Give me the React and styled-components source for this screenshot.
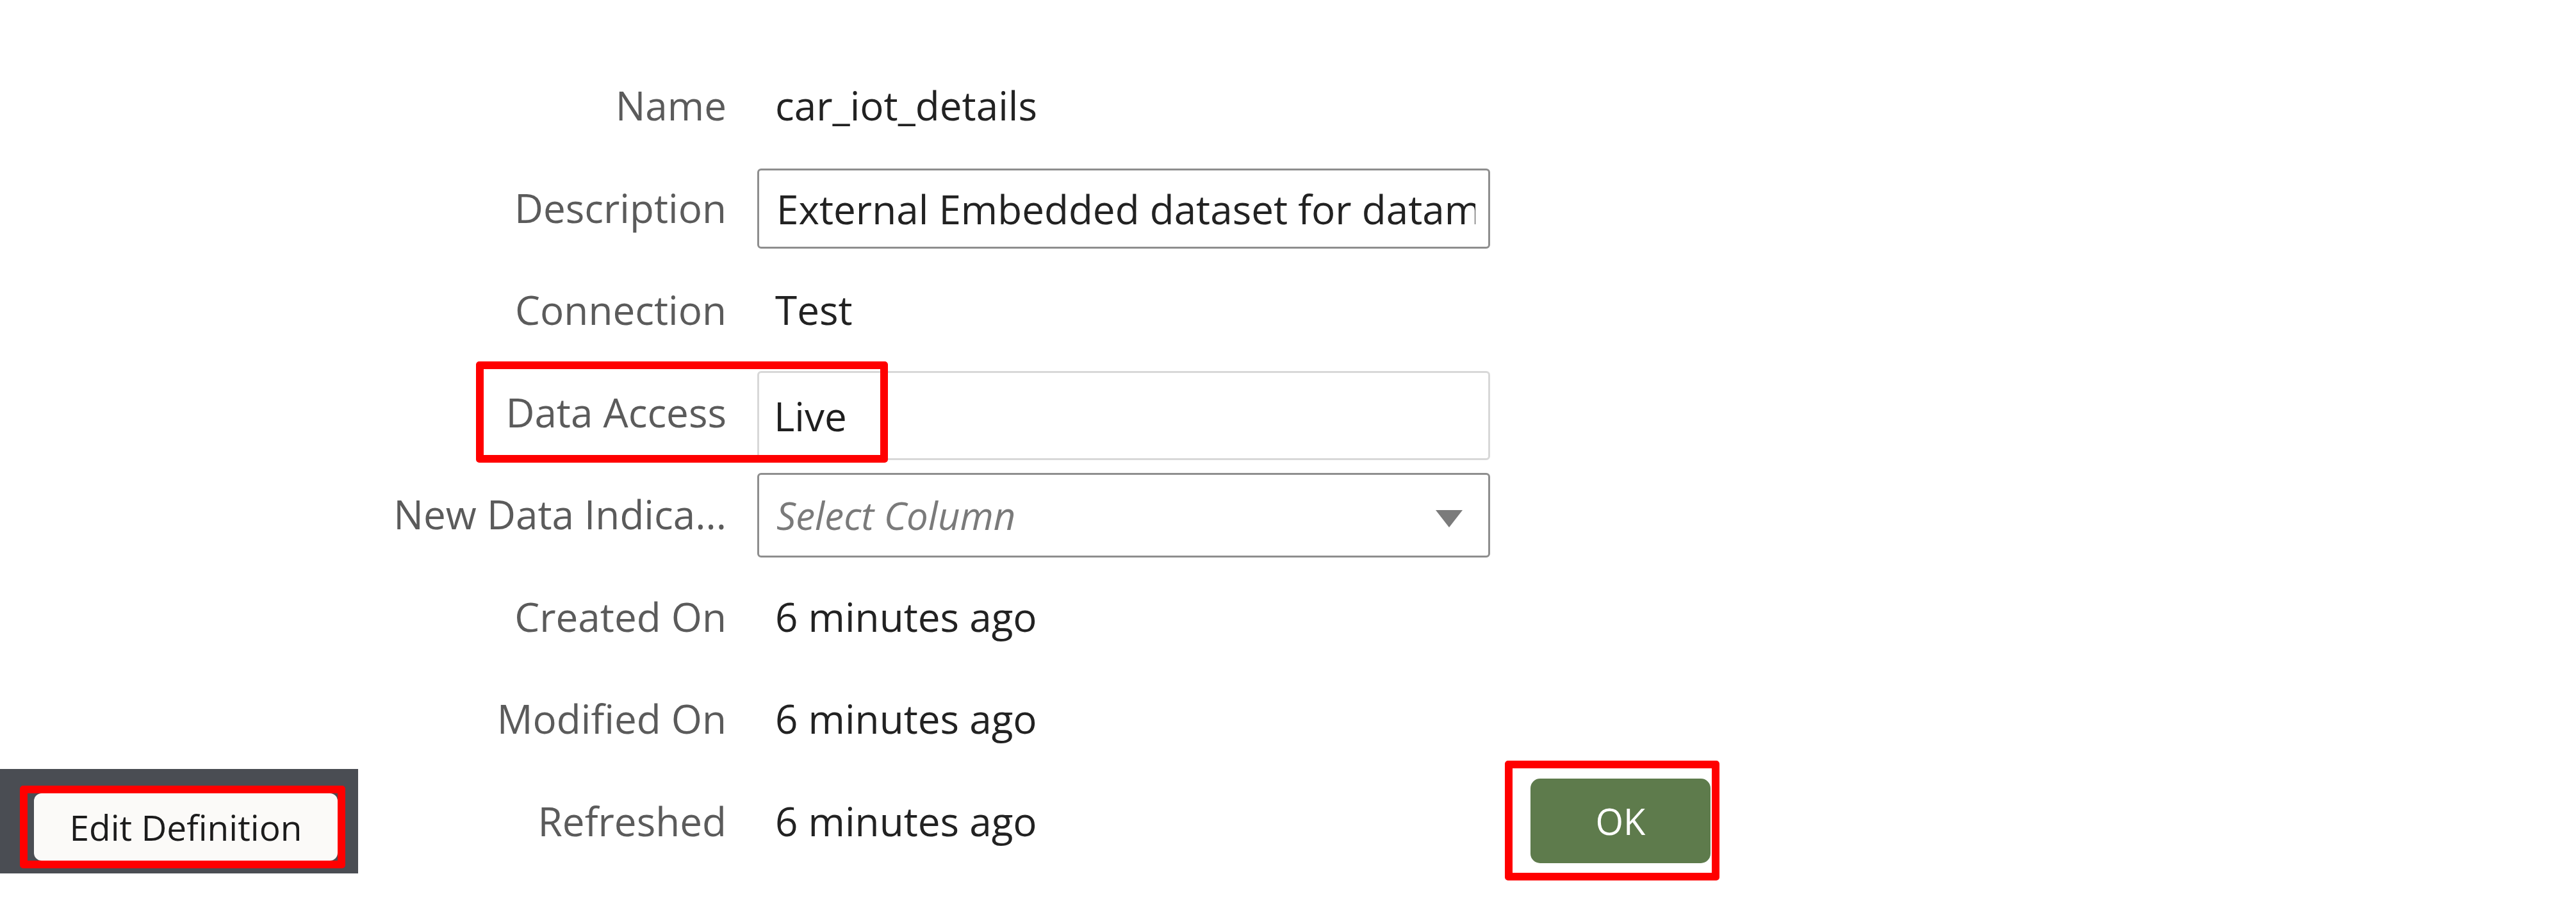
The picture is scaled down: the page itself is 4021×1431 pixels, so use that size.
import React from "react";
import styled, { createGlobalStyle } from "styled-components";

const Global = createGlobalStyle`
  html, body { margin: 0; padding: 0; background: #ffffff; }
  * { box-sizing: border-box; }
`;

const Page = styled.div`
  width: 4021px;
  height: 1431px;
  overflow: hidden;
  background: #ffffff;
  font-family: "Open Sans", "Noto Sans", "Liberation Sans", sans-serif;
`;

const Form = styled.div`
  display: grid;
  grid-template-columns: 559px 623px 1144px auto;
  grid-auto-rows: 159.5px;
  padding-top: 84.5px;
`;

const Label = styled.div`
  grid-column: 2;
  grid-row: ${(p) => p.$row};
  align-self: center;
  justify-self: end;
  margin-right: 48px;
  font-size: 62px;
  color: #5b5b5b;
  text-align: right;
  white-space: nowrap;
`;

const Value = styled.div`
  grid-column: 3;
  grid-row: ${(p) => p.$row};
  align-self: center;
  padding-left: 28px;
  font-size: 62px;
  color: #222222;
  white-space: nowrap;
`;

const TextInput = styled.input`
  grid-column: 3;
  grid-row: ${(p) => p.$row};
  align-self: start;
  margin-top: ${(p) => p.$top}px;
  height: ${(p) => p.$h}px;
  width: 100%;
  border: 3px solid #8e8e8e;
  border-radius: 6px;
  padding: 0 20px 0 27px;
  font-family: inherit;
  font-size: 62px;
  color: #222222;
  background: #ffffff;
  outline: none;
`;

const ReadField = styled.div`
  grid-column: 3;
  grid-row: ${(p) => p.$row};
  align-self: start;
  margin-top: ${(p) => p.$top}px;
  height: ${(p) => p.$h}px;
  display: flex;
  align-items: center;
  border: 3px solid #d8d8d8;
  border-radius: 6px;
  padding: 0 20px 0 23px;
  font-size: 62px;
  color: #1e1e1e;
`;

const SelectBox = styled.div`
  grid-column: 3;
  grid-row: ${(p) => p.$row};
  align-self: start;
  margin-top: ${(p) => p.$top}px;
  height: ${(p) => p.$h}px;
  display: flex;
  align-items: center;
  justify-content: space-between;
  border: 3px solid #8e8e8e;
  border-radius: 6px;
  padding: 0 40px 0 27px;
`;

const Placeholder = styled.span`
  font-size: 60px;
  font-style: italic;
  color: #7a7a7a;
`;

const Caret = styled.span`
  width: 0;
  height: 0;
  margin-top: 10px;
  border-left: 21.5px solid transparent;
  border-right: 21.5px solid transparent;
  border-top: 27px solid #7b7b7b;
`;

const Callout = styled.div`
  grid-column: 2 / 4;
  grid-row: ${(p) => p.$row};
  align-self: start;
  justify-self: start;
  margin-top: ${(p) => p.$top}px;
  margin-left: ${(p) => p.$left}px;
  width: ${(p) => p.$w}px;
  height: ${(p) => p.$h}px;
  border: 12px solid #ff0000;
  border-radius: 5px;
  pointer-events: none;
  z-index: 1;
`;

const FooterBar = styled.div`
  grid-column: 1;
  grid-row: ${(p) => p.$row};
  align-self: start;
  margin-top: -1px;
  height: 163px;
  background: #4a4d53;
  display: flex;
  align-items: flex-start;
  padding: 26px 0 0 31px;
`;

const Highlight = styled.div`
  display: flex;
  border: 12px solid #ff0000;
  border-radius: 5px;
  padding: ${(p) => p.$pad};
`;

const EditButton = styled.button`
  width: 474px;
  height: 105px;
  border: none;
  border-radius: 12px;
  background: #fbfaf8;
  font-family: inherit;
  font-size: 55px;
  font-weight: 500;
  color: #1c1c1c;
  padding: 0;
  cursor: pointer;
`;

const OkCell = styled.div`
  grid-column: 4;
  grid-row: ${(p) => p.$row};
  align-self: center;
  justify-self: start;
  margin-left: 23px;
  background: #ffffff;
`;

const OkButton = styled.button`
  width: 281px;
  height: 132px;
  border: none;
  border-radius: 15px;
  background: #5e7b4c;
  font-family: inherit;
  font-size: 56px;
  font-weight: 500;
  color: #ffffff;
  padding: 0;
  cursor: pointer;
`;

const rows = [
  { label: "Name", value: "car_iot_details" },
  { label: "Description", kind: "input", value: "External Embedded dataset for datamodel testing" },
  { label: "Connection", value: "Test" },
  { label: "Data Access", kind: "read", value: "Live" },
  { label: "New Data Indica...", kind: "select", value: "Select Column" },
  { label: "Created On", value: "6 minutes ago" },
  { label: "Modified On", value: "6 minutes ago" },
  { label: "Refreshed", value: "6 minutes ago" },
];

export default function App() {
  return (
    <Page>
      <Global />
      <Form>
        {rows.map((r, i) => {
          const row = i + 1;
          let field;
          if (r.kind === "input") {
            field = <TextInput $row={row} $top={19} $h={125} readOnly value={r.value} />;
          } else if (r.kind === "read") {
            field = (
              <ReadField $row={row} $top={16} $h={139}>
                {r.value}
              </ReadField>
            );
          } else if (r.kind === "select") {
            field = (
              <SelectBox $row={row} $top={15.5} $h={132}>
                <Placeholder>{r.value}</Placeholder>
                <Caret />
              </SelectBox>
            );
          } else {
            field = <Value $row={row}>{r.value}</Value>;
          }
          return (
            <React.Fragment key={r.label}>
              <Label $row={row}>{r.label}</Label>
              {field}
            </React.Fragment>
          );
        })}
        <Callout $row={4} $top={1} $left={184} $w={643} $h={158} />
        <FooterBar $row={8}>
          <Highlight $pad="0 0 0 10px">
            <EditButton>Edit Definition</EditButton>
          </Highlight>
        </FooterBar>
        <OkCell $row={8}>
          <Highlight $pad="16px 2px 15px 28px">
            <OkButton>OK</OkButton>
          </Highlight>
        </OkCell>
      </Form>
    </Page>
  );
}
